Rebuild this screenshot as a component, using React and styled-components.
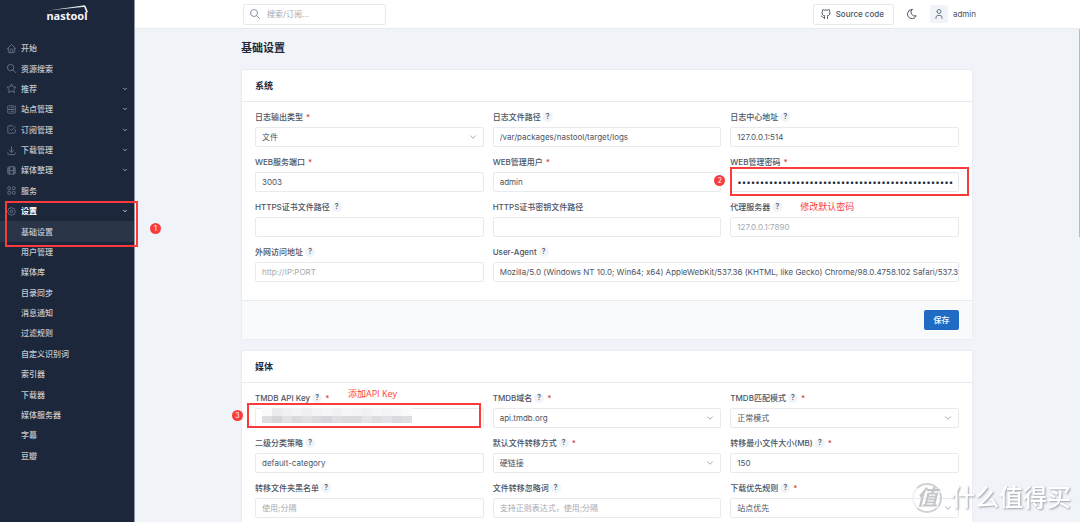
import { useState } from 'react';

import styled, { createGlobalStyle, css } from 'styled-components';
import {
  TbBrandGithub,
  TbCheckbox,
  TbChevronDown,
  TbDownload,
  TbHome,
  TbLayoutGrid,
  TbMoon,
  TbMovie,
  TbSearch,
  TbServer2,
  TbSettings,
  TbStar,
  TbUser,
} from 'react-icons/tb';

const GlobalStyle = createGlobalStyle`
  :root {
    --sidebar: #1d273b;
    --sidebar-active: #2b3548;
    --sidebar-text: #c3c7ce;
    --body: #f0f3f8;
    --text: #4b5465;
    --heading: #1f293c;
    --muted: #a5a9b1;
    --border: #e8eaed;
    --card-border: #eaecf0;
    --danger: #d63939;
    --primary: #206bc4;
    --mark: #fb3b3b;
  }

  * {
    box-sizing: border-box;
  }

  body {
    margin: 0;
    overflow: hidden;
    background: var(--body);
    color: var(--text);
    font-family: Inter, 'Noto Sans CJK SC', sans-serif;
    font-size: 8px;
    line-height: 12px;
  }

  button,
  input,
  select {
    font: inherit;
    color: inherit;
  }
`;

const Page = styled.div`
  display: flex;
  height: 100vh;
`;

const Sidebar = styled.aside`
  position: relative;
  z-index: 2;
  flex: 0 0 135px;
  display: flex;
  flex-direction: column;
  padding-bottom: 56px;
  background: var(--sidebar);
  border-right: 1px solid #8e94a0;
`;

const Logo = styled.a`
  position: relative;
  height: 38px;
  padding-top: 8px;
  text-align: center;
  color: #f4f5f7;
  font-family: 'Noto Sans', sans-serif;
  font-size: 11px;
  font-weight: 700;
  line-height: 16px;
  text-decoration: none;

  svg {
    position: absolute;
    top: 5px;
    left: 47px;
  }
`;

const Menu = styled.ul`
  flex: 1;
  display: flex;
  flex-direction: column;
  margin: 0;
  padding: 0;
  list-style: none;
`;

const MenuItem = styled.li`
  position: relative;
  flex: 1;
  display: flex;
`;

const MenuLink = styled.a`
  flex: 1;
  display: flex;
  align-items: center;
  padding: 0 6px;
  color: ${props => (props.$open ? '#fff' : 'var(--sidebar-text)')};
  background: ${props =>
    props.$active ? 'var(--sidebar-active)' : 'transparent'};
  font-weight: ${props => (props.$open ? 700 : 500)};
  text-decoration: none;

  .icon {
    width: 11px;
    height: 11px;
    color: #66718a;
    stroke-width: 2;
  }

  .label {
    flex: 1;
    margin-left: ${props => (props.$sub ? '15px' : '4px')};
  }

  .arrow {
    width: 6px;
    height: 6px;
    stroke-width: 3;
  }
`;

const Main = styled.main`
  flex: 1;
  min-width: 0;
`;

const Header = styled.header`
  background: #fff;
  border-bottom: 1px solid var(--border);
`;

const HeaderInner = styled.div`
  display: flex;
  align-items: center;
  max-width: 737px;
  height: 28px;
  margin: 0 auto;
  padding-left: 4px;
`;

const SearchBox = styled.label`
  display: flex;
  align-items: center;
  gap: 6px;
  width: 143px;
  height: 21px;
  padding: 0 5px;
  border: 1px solid var(--border);
  border-radius: 2px;

  svg {
    flex: none;
    width: 12px;
    height: 12px;
    color: #8a93a5;
  }

  input {
    width: 100%;
    padding: 0;
    border: 0;
    outline: 0;
    background: none;
  }

  input::placeholder {
    color: var(--muted);
  }
`;

const SourceButton = styled.a`
  display: flex;
  align-items: center;
  gap: 4px;
  height: 21px;
  margin-left: auto;
  padding: 0 9px 0 6px;
  border: 1px solid var(--border);
  border-radius: 2px;
  color: var(--text);
  font-weight: 500;
  text-decoration: none;

  svg {
    width: 12px;
    height: 12px;
  }
`;

const IconButton = styled.button`
  display: flex;
  margin: 0 12px;
  padding: 0;
  border: 0;
  background: none;

  svg {
    width: 12px;
    height: 12px;
  }
`;

const UserButton = styled.button`
  display: flex;
  align-items: center;
  gap: 5px;
  padding: 0;
  border: 0;
  background: none;

  span {
    display: flex;
    padding: 3px;
    border-radius: 2px;
    background: var(--body);
  }

  svg {
    width: 12px;
    height: 12px;
    color: #6c7686;
  }
`;

const Scroller = styled.div`
  padding-right: 1px;
`;

const Content = styled.div`
  display: flex;
  flex-direction: column;
  gap: 10px;
  max-width: 732px;
  margin: 0 auto;
`;

const PageTitle = styled.h1`
  margin: 11px 0 3px;
  color: var(--heading);
  font-size: 11px;
  font-weight: 700;
  line-height: 16px;
`;

const Card = styled.section`
  background: #fff;
  border: 1px solid var(--card-border);
  border-radius: 2px;
`;

const CardHeader = styled.h2`
  height: 32px;
  margin: 0;
  padding: 0 13px;
  border-bottom: 1px solid var(--border);
  color: var(--heading);
  font-size: 9px;
  font-weight: 700;
  line-height: 31px;
`;

const CardBody = styled.div`
  display: grid;
  grid-template-columns: repeat(3, 1fr);
  gap: 9px;
  padding: 9px 13px 18px;
`;

const CardFooter = styled.div`
  display: flex;
  justify-content: flex-end;
  padding: 9px 13px;
  border-top: 1px solid var(--border);
  background: #f8fafc;
`;

const SaveButton = styled.button`
  width: 35px;
  height: 20px;
  padding: 0;
  border: 0;
  border-radius: 2px;
  background: var(--primary);
  color: #fff;
  font-weight: 500;
`;

const FieldBox = styled.div`
  position: relative;
  grid-column: span ${props => props.$span || 1};
  display: flex;
  flex-direction: column;
  gap: 4px;
  min-width: 0;
`;

const FieldLabel = styled.label`
  display: flex;
  align-items: center;
  height: 12px;
  font-weight: 500;

  .required {
    margin-left: 3px;
    color: var(--danger);
  }
`;

const Help = styled.span`
  width: 10px;
  height: 10px;
  margin-left: 2px;
  border-radius: 50%;
  background: var(--body);
  font-size: 7px;
  line-height: 10px;
  text-align: center;
`;

const Control = styled.div`
  position: relative;
  display: flex;

  > svg {
    position: absolute;
    top: 5px;
    right: 6px;
    width: 10px;
    height: 10px;
    color: #8f97a5;
    pointer-events: none;
  }
`;

const controlStyle = css`
  width: 100%;
  height: 20px;
  padding: 0 0 0 6px;
  border: 1px solid var(--border);
  border-radius: 2px;
  outline: 0;
  background: #fff;
`;

const Input = styled.input`
  ${controlStyle}

  &[type='password'] {
    color: var(--heading);
  }

  &::placeholder {
    color: var(--muted);
  }
`;

const Select = styled.select`
  ${controlStyle}
  appearance: none;
`;

// red guide marks drawn over the form
const Frame = styled.span`
  position: absolute;
  z-index: 1;
  inset: ${props => props.$inset};
  border: 2px solid var(--mark);
  pointer-events: none;
`;

const Step = styled.span`
  position: absolute;
  z-index: 1;
  left: ${props => props.$left};
  top: ${props => props.$top};
  width: 11px;
  height: 11px;
  border-radius: 50%;
  background: var(--mark);
  color: #fff;
  font-size: 7px;
  line-height: 11px;
  text-align: center;
`;

const Note = styled.span`
  position: absolute;
  left: ${props => props.$left};
  top: ${props => props.$top};
  color: var(--mark);
  font-family: 'Open Sans', 'Noto Sans CJK SC', sans-serif;
  font-size: 9px;
  white-space: nowrap;
`;

const Mosaic = styled.span`
  position: absolute;
  top: 0;
  left: 7px;
  display: grid;
  grid-template-columns: repeat(15, 10px);
  grid-template-rows: 8px 7px;
`;

const Tile = styled.i`
  background: ${props => props.$tone};
`;

const ScrollThumb = styled.div`
  position: fixed;
  top: 29px;
  right: 0;
  width: 1px;
  height: 208px;
  background: #b5bac3;
`;

const Watermark = styled.div`
  position: fixed;
  z-index: 3;
  right: 9px;
  bottom: 8px;
  display: flex;
  align-items: center;
  gap: 9px;
  color: #fff;
  font-size: 24px;
  font-weight: 500;
  line-height: 32px;
  text-shadow: 1px 1px 2px #9a9ea6;

  span {
    width: 30px;
    height: 30px;
    border: 2px solid #cfd1d5;
    border-left-color: #f0f1f3;
    border-radius: 50%;
    color: #c4c6ca;
    font-size: 21px;
    font-style: italic;
    font-weight: 700;
    line-height: 25px;
    text-align: center;
    text-shadow: 1px 1px 0 #fff;
  }
`;

const menu = [
  { label: '开始', icon: TbHome },
  { label: '资源搜索', icon: TbSearch },
  { label: '推荐', icon: TbStar, arrow: true },
  { label: '站点管理', icon: TbServer2, arrow: true },
  { label: '订阅管理', icon: TbCheckbox, arrow: true },
  { label: '下载管理', icon: TbDownload, arrow: true },
  { label: '媒体整理', icon: TbMovie, arrow: true },
  { label: '服务', icon: TbLayoutGrid },
  { label: '设置', icon: TbSettings, arrow: true, open: true },
  { label: '基础设置', active: true },
  { label: '用户管理' },
  { label: '媒体库' },
  { label: '目录同步' },
  { label: '消息通知' },
  { label: '过滤规则' },
  { label: '自定义识别词' },
  { label: '索引器' },
  { label: '下载器' },
  { label: '媒体服务器' },
  { label: '字幕' },
  { label: '豆瓣' },
];

const userAgent =
  'Mozilla/5.0 (Windows NT 10.0; Win64; x64) AppleWebKit/537.36 (KHTML, like Gecko) Chrome/98.0.4758.102 Safari/537.3';

const topTones = '#fafafb #ececef #f1f1f4 #f4f4f6 #efeff2 #f3f3f5 #f5f5f7 #f1f1f4 #f6f6f8 #f3f3f5 #f1f1f4 #f5f5f7 #f3f3f5 #f7f7f9 #fafafb'.split(' ');
const bottomTones = '#dedee2 #d5d5da #e2e2e6 #d9d9de #e0e0e4 #dadadf #d6d6dc #dedee3 #dadadf #d9d9de #e4e4e8 #dcdce1 #e2e2e7 #d9d9df #dedee2'.split(' ');

function Field({
  id,
  label,
  help,
  required,
  options,
  type = 'text',
  value = '',
  placeholder,
  span,
  overlay,
  children,
}) {
  const [current, setCurrent] = useState(value);
  const handleChange = event => setCurrent(event.target.value);

  return (
    <FieldBox $span={span}>
      <FieldLabel htmlFor={id}>
        {label}
        {help && <Help>?</Help>}
        {required && <span className="required">*</span>}
      </FieldLabel>
      <Control>
        {options ? (
          <>
            <Select id={id} value={current} onChange={handleChange}>
              {options.map(option => (
                <option key={option}>{option}</option>
              ))}
            </Select>
            <TbChevronDown />
          </>
        ) : (
          <Input
            id={id}
            type={type}
            value={current}
            placeholder={placeholder}
            onChange={handleChange}
          />
        )}
        {overlay}
      </Control>
      {children}
    </FieldBox>
  );
}

function SideMenu() {
  return (
    <Sidebar>
      <Logo href="#">
        nastool
        <svg width="44" height="10" viewBox="0 0 44 10" fill="none">
          <path
            d="M1 5.600 36 .4c1.800-.2 2.500.2 3 1.600L41 7l-1.700.6-1.700-4.500c-.3-.9-.7-1.100-1.700-1z"
            fill="#e6e8ec"
          />
        </svg>
      </Logo>
      <Menu>
        {menu.map(({ label, icon: Icon, arrow, open, active }) => (
          <MenuItem key={label}>
            <MenuLink href="#" $open={open} $active={active} $sub={!Icon}>
              {Icon && <Icon className="icon" />}
              <span className="label">{label}</span>
              {arrow && <TbChevronDown className="arrow" />}
            </MenuLink>
            {open && (
              <>
                <Frame $inset="0 -4px -26px 5px" />
                <Step $left="150px" $top="22px">1</Step>
              </>
            )}
          </MenuItem>
        ))}
      </Menu>
    </Sidebar>
  );
}

function TopBar() {
  return (
    <Header>
      <HeaderInner>
        <SearchBox>
          <TbSearch />
          <input type="text" aria-label="搜索" placeholder="搜索/订阅..." />
        </SearchBox>
        <SourceButton href="#">
          <TbBrandGithub />
          Source code
        </SourceButton>
        <IconButton type="button" aria-label="深色模式">
          <TbMoon />
        </IconButton>
        <UserButton type="button">
          <span>
            <TbUser />
          </span>
          admin
        </UserButton>
      </HeaderInner>
    </Header>
  );
}

function SystemCard() {
  return (
    <Card>
      <CardHeader>系统</CardHeader>
      <CardBody>
        <Field id="logtype" label="日志输出类型" required options={['文件']} value="文件" />
        <Field id="logpath" label="日志文件路径" help value="/var/packages/nastool/target/logs" />
        <Field id="logserver" label="日志中心地址" help value="127.0.0.1:514" />
        <Field id="port" label="WEB服务端口" required value="3003" />
        <Field id="user" label="WEB管理用户" required value="admin" />
        <Field
          id="password"
          label="WEB管理密码"
          required
          type="password"
          value={'x'.repeat(48)}
          overlay={
            <>
              <Frame $inset="-5px -10px -4px 0" />
              <Step $left="-16px" $top="3px">2</Step>
            </>
          }
        />
        <Field id="cert" label="HTTPS证书文件路径" help />
        <Field id="certkey" label="HTTPS证书密钥文件路径" />
        <Field id="proxy" label="代理服务器" help placeholder="127.0.0.1:7890">
          <Note $left="70px" $top="0">修改默认密码</Note>
        </Field>
        <Field id="domain" label="外网访问地址" help placeholder="http://IP:PORT" />
        <Field id="agent" label="User-Agent" help span={2} value={userAgent} />
      </CardBody>
      <CardFooter>
        <SaveButton type="button">保存</SaveButton>
      </CardFooter>
    </Card>
  );
}

function MediaCard() {
  return (
    <Card>
      <CardHeader>媒体</CardHeader>
      <CardBody>
        <Field
          id="apikey"
          label="TMDB API Key"
          help
          required
          overlay={
            <>
              <Mosaic>
                {[...topTones, ...bottomTones].map((tone, index) => (
                  <Tile key={index} $tone={tone} />
                ))}
              </Mosaic>
              <Frame $inset="-5px 3px 0 -8px" />
              <Step $left="-23px" $top="2px">3</Step>
            </>
          }
        >
          <Note $left="93px" $top="-4px">添加API Key</Note>
        </Field>
        <Field id="tmdb" label="TMDB域名" help required options={['api.tmdb.org']} value="api.tmdb.org" />
        <Field id="match" label="TMDB匹配模式" help required options={['正常模式']} value="正常模式" />
        <Field id="category" label="二级分类策略" help value="default-category" />
        <Field id="transfer" label="默认文件转移方式" help required options={['硬链接']} value="硬链接" />
        <Field id="minsize" label="转移最小文件大小(MB)" help required value="150" />
        <Field id="blacklist" label="转移文件夹黑名单" help placeholder="使用;分隔" />
        <Field id="ignore" label="文件转移忽略词" help placeholder="支持正则表达式，使用;分隔" />
        <Field id="priority" label="下载优先规则" help required options={['站点优先']} value="站点优先" />
      </CardBody>
    </Card>
  );
}

function App() {
  return (
    <>
      <GlobalStyle />
      <Page>
        <SideMenu />
        <Main>
          <TopBar />
          <Scroller>
            <Content>
              <PageTitle>基础设置</PageTitle>
              <SystemCard />
              <MediaCard />
            </Content>
          </Scroller>
        </Main>
      </Page>
      <ScrollThumb />
      <Watermark>
        <span>值</span>
        什么值得买
      </Watermark>
    </>
  );
}

export default App;
